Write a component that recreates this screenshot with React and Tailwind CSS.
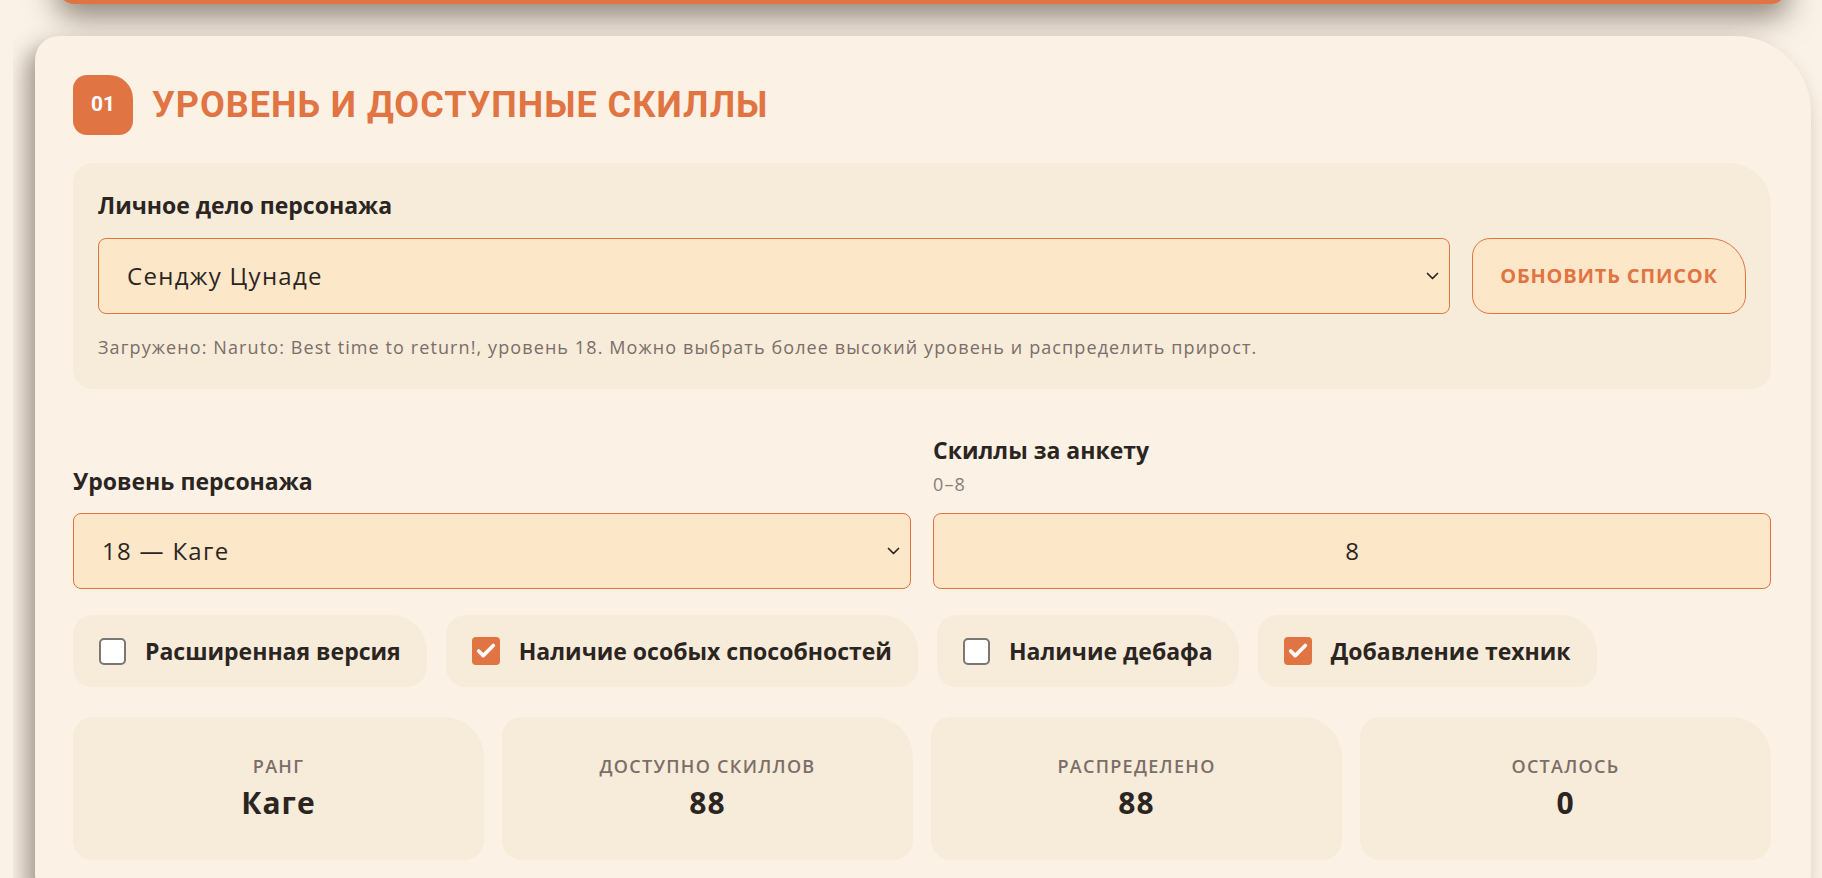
import { Check } from 'lucide-react'

const options = [
  { label: 'Расширенная версия', checked: false },
  { label: 'Наличие особых способностей', checked: true },
  { label: 'Наличие дебафа', checked: false },
  { label: 'Добавление техник', checked: true },
]

const stats = [
  { label: 'Ранг', value: 'Каге' },
  { label: 'Доступно скиллов', value: '88' },
  { label: 'Распределено', value: '88' },
  { label: 'Осталось', value: '0' },
]

function Chevron() {
  return (
    <svg width="13" height="8" viewBox="0 0 13 8" fill="none" className="shrink-0">
      <polyline points="1.5,1.5 6.5,6.5 11.5,1.5" stroke="#2b2522" strokeWidth="1.7" strokeLinecap="round" strokeLinejoin="round" />
    </svg>
  )
}

function Box({ checked }) {
  if (checked) {
    return (
      <span className="w-[28px] h-[28px] shrink-0 rounded-[4px] bg-[#e07443] flex items-center justify-center">
        <Check size={22} strokeWidth={4} color="#fff" />
      </span>
    )
  }
  return <span className="w-[27px] h-[27px] shrink-0 rounded-[5px] border-2 border-[#7a7672] bg-white" />
}

export default function App() {
  return (
    <div className="h-screen overflow-hidden bg-[#fbf2e7] flex font-['Open_Sans',sans-serif] text-[#2b2522]">
      <div className="w-[13px] shrink-0" />
      <div className="flex-1 overflow-hidden">
        {/* bottom of the previous section */}
        <div className="ml-[44px] mr-[34px] -mt-[56px] h-[60px] rounded-b-[18px] bg-[#e07443] shadow-[0_14px_30px_rgba(45,32,20,0.5)]" />

        <section className="ml-[22px] mr-[11px] mt-[32px] bg-[#fbf1e5] rounded-tl-[24px] rounded-tr-[76px] rounded-b-[24px] pt-[39px] pl-[38px] pr-[40px] pb-[38px] shadow-[-9px_10px_22px_rgba(45,32,20,0.42)]">
          <div className="flex items-center gap-[19px]">
            <div className="w-[60px] h-[60px] bg-[#e07443] rounded-[14px] rounded-tr-[24px] flex items-center justify-center text-white font-['Roboto',sans-serif] font-bold text-[21px]">
              01
            </div>
            <h2 className="font-['Roboto',sans-serif] font-bold text-[36px] tracking-[1px] leading-none text-[#e07443] uppercase">
              Уровень и доступные скиллы
            </h2>
          </div>

          <div className="mt-[28px] bg-[#f7ebda] rounded-[20px] rounded-tr-[42px] pt-[28px] px-[25px] pb-[29px]">
            <div className="text-[23px] font-bold leading-[28px] mb-[19px]">Личное дело персонажа</div>
            <div className="flex gap-[22px]">
              <div className="flex-1 h-[76px] bg-[#fde7c9] border border-[#e2733f] rounded-[8px] flex items-center justify-between pl-[28px] pr-[10px]">
                <span className="text-[24px] tracking-[1.3px]">Сенджу Цунаде</span>
                <Chevron />
              </div>
              <button className="w-[274px] h-[76px] bg-[#fde7c9] border border-[#e2733f] rounded-[18px] rounded-tr-[36px] text-[#e07443] font-bold text-[20px] tracking-[0.8px] uppercase">
                Обновить список
              </button>
            </div>
            <p className="mt-[20px] text-[18px] tracking-[1.1px] leading-[26px] text-[#7b6e68]">
              Загружено: Naruto: Best time to return!, уровень 18. Можно выбрать более высокий уровень и распределить прирост.
            </p>
          </div>

          <div className="mt-[47px] grid grid-cols-2 gap-x-[22px] items-end">
            <div>
              <div className="text-[23px] font-bold leading-[28px]">Уровень персонажа</div>
              <div className="mt-[18px] h-[76px] bg-[#fde7c9] border border-[#e2733f] rounded-[8px] flex items-center justify-between pl-[28px] pr-[10px]">
                <span className="text-[24px] tracking-[1.3px]">18 — Каге</span>
                <Chevron />
              </div>
            </div>
            <div>
              <div className="text-[23px] font-bold leading-[28px]">Скиллы за анкету</div>
              <div className="mt-[8px] text-[18px] tracking-[1.1px] leading-[24px] text-[#8a7e78]">0–8</div>
              <div className="mt-[17px] h-[76px] bg-[#fde7c9] border border-[#e2733f] rounded-[8px] flex items-center justify-center">
                <span className="text-[24px]">8</span>
              </div>
            </div>
          </div>

          <div className="mt-[26px] flex gap-[19px]">
            {options.map((o) => (
              <label key={o.label} className="h-[72px] bg-[#f7ebda] rounded-[20px] rounded-tr-[36px] px-[26px] flex items-center gap-[19px]">
                <Box checked={o.checked} />
                <span className="text-[23px] font-bold whitespace-nowrap">{o.label}</span>
              </label>
            ))}
          </div>

          <div className="mt-[30px] grid grid-cols-4 gap-[18px]">
            {stats.map((s) => (
              <div key={s.label} className="h-[143px] bg-[#f7ebda] rounded-[20px] rounded-tr-[40px] flex flex-col items-center justify-center pb-[2px]">
                <div className="text-[18px] font-semibold tracking-[1.3px] uppercase text-[#7b6e68] leading-[22px]">{s.label}</div>
                <div className="mt-[8px] text-[30px] tracking-[1px] font-bold leading-[36px]">{s.value}</div>
              </div>
            ))}
          </div>
        </section>
      </div>
    </div>
  )
}
